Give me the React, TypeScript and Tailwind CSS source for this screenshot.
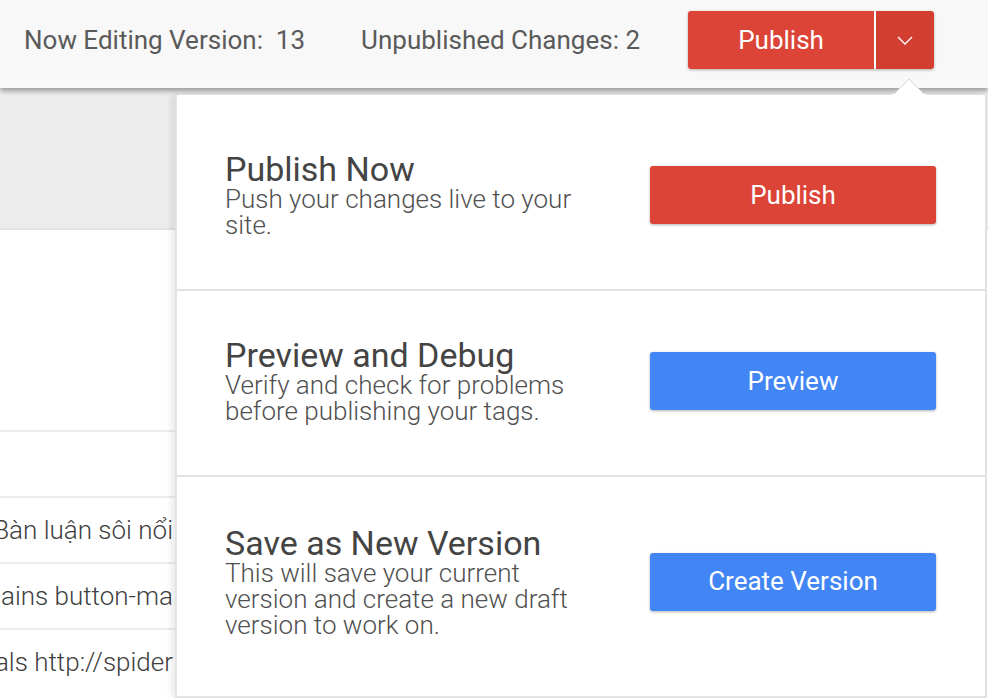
const font = { fontFamily: 'Roboto, "Noto Sans", Arial, sans-serif' }
const light = { fontFamily: '"Roboto Light", Roboto, "Noto Sans", Arial, sans-serif' }

interface Action {
  title: string
  desc: string
  label: string
  tone: 'red' | 'blue'
  box: string
}

const actions: Action[] = [
  {
    title: 'Publish Now',
    desc: 'Push your changes live to your site.',
    label: 'Publish',
    tone: 'red',
    box: 'h-[194px] pt-[6px]',
  },
  {
    title: 'Preview and Debug',
    desc: 'Verify and check for problems before publishing your tags.',
    label: 'Preview',
    tone: 'blue',
    box: 'h-[186px] pb-[4px]',
  },
  {
    title: 'Save as New Version',
    desc: 'This will save your current version and create a new draft version to work on.',
    label: 'Create Version',
    tone: 'blue',
    box: 'h-[221px] pb-[10px]',
  },
]

// list rows peeking out from under the menu
const rows = ['', 'Bàn luận sôi nổi', 'ains button-ma', 'als http://spider']

function Chevron() {
  return (
    <svg width="16" height="9" viewBox="0 0 16 9" fill="none">
      <polyline points="1,1 8,8 15,1" stroke="#ffffff" strokeWidth="1.4" />
    </svg>
  )
}

function PublishMenu() {
  return (
    <div className="absolute z-20 left-[175px] top-[95px] w-[812px] h-[603px] bg-white border-l-2 border-r-2 border-b-2 border-[#e2e2e2] shadow-[-4px_0_6px_rgba(0,0,0,0.08)]">
      {/* caret pointing at the dropdown toggle */}
      <svg className="absolute -top-[17px] left-[715px]" width="34" height="18" viewBox="0 0 34 18">
        <polygon points="1,17 17,1 33,17" fill="#ffffff" stroke="#d6d6d6" strokeWidth="1" />
        <rect x="0" y="16" width="34" height="2" fill="#ffffff" />
      </svg>
      {actions.map((a, i) => (
        <div
          key={a.title}
          className={`flex items-center pl-[48px] pr-[49px] ${a.box} ${i > 0 ? 'border-t-2 border-[#e2e2e2]' : ''}`}
        >
          <div className="w-[362px]">
            <div className="text-[34px] leading-[34px] text-[#444444]">{a.title}</div>
            <div className="text-[26px] leading-[26px] font-light text-[#505050]" style={light}>
              {a.desc}
            </div>
          </div>
          <button
            className={`ml-auto w-[286px] h-[58px] rounded-[3px] text-white text-[26px] shadow-[0_1px_3px_rgba(0,0,0,0.3)] ${
              a.tone === 'red' ? 'bg-[#db4437]' : 'bg-[#4285f4]'
            }`}
          >
            {a.label}
          </button>
        </div>
      ))}
    </div>
  )
}

export default function App() {
  return (
    <div className="relative w-[988px] h-[698px] overflow-hidden bg-white" style={font}>
      {/* Header */}
      <div className="relative z-10 h-[88px] bg-[#f8f8f8] flex items-center pb-[8px] pl-[24px] text-[26px] text-[#5a5a5a] shadow-[0_3px_5px_rgba(0,0,0,0.35)]">
        <span className="whitespace-pre">Now Editing Version:  13</span>
        <span className="ml-[56px]">Unpublished Changes: 2</span>
        <div className="ml-[48px] flex h-[58px] shadow-[0_1px_3px_rgba(0,0,0,0.3)] rounded-[3px]">
          <button className="w-[186px] bg-[#db4437] text-white text-[26px] rounded-l-[3px]">Publish</button>
          <div className="w-[2px] bg-white" />
          <button className="w-[58px] bg-[#d23f31] rounded-r-[3px] flex items-center justify-center">
            <Chevron />
          </button>
        </div>
      </div>

      {/* Page behind the menu */}
      <div className="flex flex-col">
        <div className="h-[142px] bg-[#ececec] border-b-2 border-[#e2e2e2]" />
        <div className="h-[200px]" />
        {rows.map((r, i) => (
          <div key={i} className="h-[66px] border-t-2 border-[#ececec] w-[175px] flex items-center justify-end">
            <span className="whitespace-nowrap text-[26px] font-light text-[#404040] pr-[2px]" style={light}>
              {r}
            </span>
          </div>
        ))}
      </div>

      <PublishMenu />
    </div>
  )
}
